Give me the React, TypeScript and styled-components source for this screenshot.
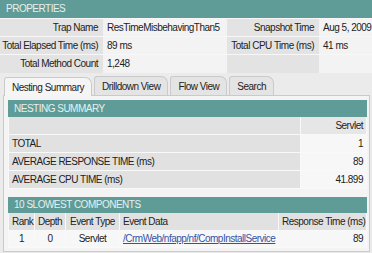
import React from 'react';
import styled, { createGlobalStyle } from "styled-components";

const GlobalStyle = createGlobalStyle`
* { box-sizing: border-box; }
body {
  margin: 0;
  background: #ebebeb;
  font-family: "Liberation Sans", Arial, sans-serif;
  font-size: 10px;
  letter-spacing: -0.5px;
  color: #222;
}
`;

const Page = styled.div`
width: 372px;
display: flex;
flex-direction: column;
`;

const SectionBar = styled.div<{ $h: number }>`
height: ${p => p.$h}px;
line-height: ${p => p.$h}px;
background: #5f9c97;
color: #e6f0ef;
padding-left: 6px;
text-transform: uppercase;
`;

const Table = styled.table`
width: 100%;
border-collapse: collapse;
table-layout: fixed;
`;

const PropLabel = styled.td<{ $w: number }>`
width: ${p => p.$w}px;
height: 18px;
padding: 0 5px 0 0;
background: #e3e3e3;
text-align: right;
white-space: nowrap;
border-top: 1px solid #f7f7f7;
`;

const PropValue = styled.td<{ $w?: number }>`
${p => p.$w ? `width: ${p.$w}px;` : ''}
height: 18px;
padding: 0 0 0 4px;
background: #f3f3f3;
white-space: nowrap;
overflow: hidden;
border-top: 1px solid #f7f7f7;
`;

const TabStrip = styled.div`
display: flex;
align-items: flex-end;
height: 22px;
padding-left: 4px;
`;

const Tab = styled.div<{ $active?: boolean }>`
height: 19px;
line-height: 19px;
padding: 0 7px;
margin-right: 2px;
border: 1px solid #cacaca;
border-bottom: none;
border-radius: 3px 7px 0 0;
background: ${p => p.$active ? '#f5f5f5' : '#e4e4e4'};
position: relative;
margin-bottom: ${p => p.$active ? '-1px' : '0'};
z-index: ${p => p.$active ? 1 : 0};
`;

const Panel = styled.div`
margin: 0 2px 0 3px;
border: 1px solid #cacaca;
background: #f4f4f4;
padding: 4px 2px 3px 4px;
display: flex;
flex-direction: column;
`;

const Gap = styled.div`
height: 8px;
`;

const Cell = styled.td<{ $w?: number; $h: number; $align?: string; $head?: boolean; $shade?: boolean }>`
${p => p.$w ? `width: ${p.$w}px;` : ''}
height: ${p => p.$h}px;
padding: 0 3px;
text-align: ${p => p.$align || 'left'};
background: ${p => p.$shade ? '#e1e1e1' : (p.$head ? '#e6e6e6' : '#f7f7f7')};
border: 1px solid #f9f9f9;
border-top: none;
white-space: nowrap;
overflow: hidden;
`;

const Link = styled.a`
color: #3452a4;
text-decoration: underline;
`;

const nesting = [
  { label: 'TOTAL', value: '1' },
  { label: 'AVERAGE RESPONSE TIME (ms)', value: '89' },
  { label: 'AVERAGE CPU TIME (ms)', value: '41.899' },
];

export default function App() {
  return (
    <Page>
      <GlobalStyle />
      <SectionBar $h={18}>Properties</SectionBar>
      <Table>
        <tbody>
          <tr>
            <PropLabel $w={103}>Trap Name</PropLabel>
            <PropValue $w={124}>ResTimeMisbehavingThan5</PropValue>
            <PropLabel $w={92}>Snapshot Time</PropLabel>
            <PropValue>Aug 5, 2009</PropValue>
          </tr>
          <tr>
            <PropLabel $w={103}>Total Elapsed Time (ms)</PropLabel>
            <PropValue>89 ms</PropValue>
            <PropLabel $w={92}>Total CPU Time (ms)</PropLabel>
            <PropValue>41 ms</PropValue>
          </tr>
          <tr>
            <PropLabel $w={103}>Total Method Count</PropLabel>
            <PropValue>1,248</PropValue>
            <PropLabel $w={92}></PropLabel>
            <PropValue></PropValue>
          </tr>
        </tbody>
      </Table>
      <TabStrip>
        <Tab $active>Nesting Summary</Tab>
        <Tab>Drilldown View</Tab>
        <Tab>Flow View</Tab>
        <Tab>Search</Tab>
      </TabStrip>
      <Panel>
        <SectionBar $h={17}>Nesting Summary</SectionBar>
        <Table>
          <tbody>
            <tr>
              <Cell $h={18} $shade></Cell>
              <Cell $h={18} $w={66} $align="right" $head>Servlet</Cell>
            </tr>
            {nesting.map((x) => (
              <tr key={x.label}>
                <Cell $h={18} $shade>{x.label}</Cell>
                <Cell $h={18} $w={66} $align="right">{x.value}</Cell>
              </tr>
            ))}
          </tbody>
        </Table>
        <Gap />
        <SectionBar $h={16}>10 Slowest Components</SectionBar>
        <Table>
          <tbody>
            <tr>
              <Cell $h={17} $w={26} $align="center" $shade>Rank</Cell>
              <Cell $h={17} $w={31} $align="center" $shade>Depth</Cell>
              <Cell $h={17} $w={54} $align="center" $shade>Event Type</Cell>
              <Cell $h={17} $shade>Event Data</Cell>
              <Cell $h={17} $w={88} $align="right" $shade>Response Time (ms)</Cell>
            </tr>
            <tr>
              <Cell $h={17} $align="center">1</Cell>
              <Cell $h={17} $align="center">0</Cell>
              <Cell $h={17} $align="center">Servlet</Cell>
              <Cell $h={17}><Link href="#">/CrmWeb/nfapp/nf/CompInstallService</Link></Cell>
              <Cell $h={17} $align="right">89</Cell>
            </tr>
          </tbody>
        </Table>
      </Panel>
    </Page>
  );
}
